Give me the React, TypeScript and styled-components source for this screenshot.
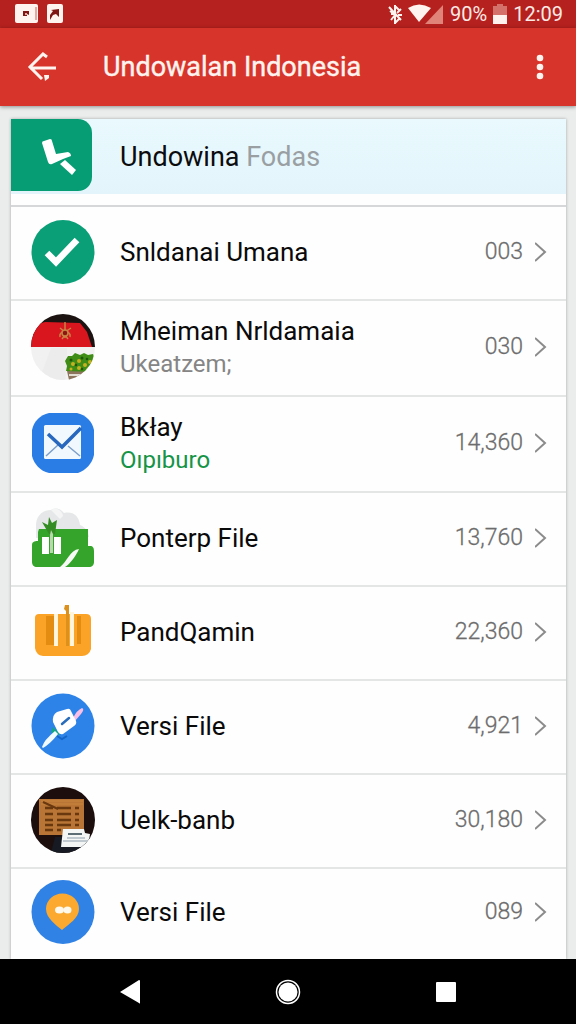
import React from "react";
import styled, { createGlobalStyle } from "styled-components";

const GlobalStyle = createGlobalStyle`
  * { box-sizing: border-box; }
  body {
    margin: 0;
    background: #ebecec;
    font-family: Roboto, "Liberation Sans", sans-serif;
  }
  button { border: 0; padding: 0; background: none; color: inherit; font: inherit; cursor: pointer; }
  svg { display: block; flex: none; }
`;

const Screen = styled.div`
  display: flex;
  flex-direction: column;
  min-height: 100vh;
`;

const StatusBar = styled.div`
  display: flex;
  align-items: center;
  justify-content: space-between;
  height: 28px;
  padding: 0 13px 0 15px;
  background: #b5211e;
  color: #fdeae6;
  font-size: 20px;
  line-height: 24px;
`;

const StatusGroup = styled.div<{ $gap: number }>`
  display: flex;
  align-items: center;
  gap: ${(p) => p.$gap}px;
`;

const AppBar = styled.header`
  display: flex;
  align-items: center;
  height: 78px;
  padding: 0 24px;
  background: #d7352b;
  color: #fff3ef;
  box-shadow: 0 1px 4px rgba(0, 0, 0, 0.4);
  z-index: 1;
`;

const Title = styled.h1`
  flex: 1;
  margin: 0 0 0 43px;
  font-size: 27px;
  line-height: 36px;
  font-weight: 400;
  -webkit-text-stroke: 0.4px currentColor;
`;

const IconButton = styled.button`
  display: grid;
  place-items: center;
  width: 36px;
  height: 48px;
  flex: none;
`;

const MenuButton = styled(IconButton)`
  width: 24px;
`;

const Card = styled.main`
  flex: 1;
  margin: 13px 10px 0 11px;
  background: #fefefe;
  box-shadow: 0 0 3px rgba(0, 0, 0, 0.3);
`;

const Banner = styled.a`
  display: flex;
  align-items: center;
  height: 75px;
  background: linear-gradient(#e9f9fe, #e3f5fb);
  color: #0b0c0d;
  font-size: 27px;
  line-height: 32px;
  text-decoration: none;
`;

const BannerIcon = styled.span`
  display: grid;
  place-items: center;
  align-self: flex-start;
  width: 81px;
  height: 72px;
  margin-right: 28px;
  border-radius: 0 14px 14px 0;
  background: #079d74;
`;

const Muted = styled.span`
  color: #999fa2;
`;

const List = styled.ul`
  margin: 11px 0 0;
  padding: 0;
  list-style: none;
  border-top: 2px solid #d6d7d8;
`;

const Row = styled.a<{ $tall: boolean }>`
  display: flex;
  align-items: center;
  min-height: ${(p) => (p.$tall ? 94 : 92)}px;
  padding: 10px 18px 13px 20px;
  color: #0a0a0a;
  text-decoration: none;
`;

const Item = styled.li`
  border-bottom: 2px solid #e4e5e5;
  &:last-child { border-bottom: 0; }
  &:last-child ${Row} { min-height: 88px; }
`;

const Labels = styled.span`
  display: flex;
  flex-direction: column;
  flex: 1;
  min-width: 0;
  margin-left: 25px;
`;

const Name = styled.span`
  font-size: 26px;
  line-height: 34px;
`;

const Detail = styled.span<{ $color: string }>`
  color: ${(p) => p.$color};
  font-size: 24px;
  line-height: 32px;
`;

const Count = styled.span`
  margin-right: 12px;
  color: #6c6c6c;
  font-size: 23px;
  font-weight: 300;
  line-height: 32px;
  -webkit-text-stroke: 0.3px currentColor;
`;

const NavBar = styled.nav`
  display: flex;
  align-items: center;
  justify-content: space-between;
  height: 65px;
  padding: 0 106px;
  background: #000;
  color: #fff;
  z-index: 1;
`;

const NavButton = styled.button`
  display: grid;
  place-items: center;
  width: 48px;
  height: 48px;
`;

const CheckIcon = () => (
  <svg width="64" height="66" viewBox="0 0 64 66" aria-hidden="true">
    <ellipse cx="32" cy="33" rx="31.5" ry="32" fill="#0b9f78" />
    <path d="M16 34 25 43 46 21" fill="none" stroke="#fff" strokeWidth="6.5" />
  </svg>
);

const FlagIcon = () => (
  <svg width="64" height="66" viewBox="0 0 64 66" aria-hidden="true">
    <defs>
      <clipPath id="flagClip"><ellipse cx="32" cy="33" rx="32" ry="33" /></clipPath>
    </defs>
    <g clipPath="url(#flagClip)">
      <path d="M0 0H64V66H0Z" fill="#f1f1f1" />
      <path d="M0 0H64V33H0Z" fill="#1b1312" />
      <path d="M0 33V12L14 8 49 9 56 18 61 33Z" fill="#d9151d" />
      <path d="M20 34H36V48L34 66H8Z" fill="#e9eaea" opacity=".6" />
      <g stroke="#c98445" strokeWidth="1.5" fill="none">
        <path d="M34 8V24M29 14 34 18 40 14M29 23Q28 18 34 18T39 23M31 25 34 21 37 25" />
        <circle cx="34" cy="19" r="3" fill="#8c1712" />
      </g>
      <path d="M36 57H64V66H38Z" fill="#8c755c" />
      <path d="M38 61H62" stroke="#e3ded3" strokeWidth="2" />
      <path d="M35 57 36 52 34 47 37 42 41 42 44 39 49 41 53 39 57 41 62 40 64 45V58Z" fill="#3f8d16" />
      <g fill="#c8b01f">
        <circle cx="42" cy="50" r="2" /><circle cx="48" cy="47" r="2" /><circle cx="54" cy="51" r="2" />
        <circle cx="59" cy="48" r="2" /><circle cx="48" cy="54" r="2" /><circle cx="40" cy="55" r="1.5" />
        <circle cx="57" cy="55" r="1.5" />
      </g>
      <g fill="#1e590b">
        <circle cx="40" cy="46" r="1.5" /><circle cx="51" cy="44" r="1.5" /><circle cx="45" cy="51" r="1.3" />
        <circle cx="56" cy="45" r="1.3" /><circle cx="51" cy="55" r="1.3" /><circle cx="61" cy="53" r="1.3" />
      </g>
    </g>
  </svg>
);

const MailIcon = () => (
  <svg width="64" height="66" viewBox="0 0 64 66" aria-hidden="true">
    <path d="M18 3H46C55 5 61 11 63 20V45C61 54 55 60 47 63H18C9 61 3 54 1 46V20C3 11 9 5 18 3Z" fill="#2b7de6" />
    <rect x="13" y="15" width="37" height="34" rx="1.5" fill="#f1f9fe" />
    <path d="M15 46 27 35M49 46 37 36" stroke="#7d9fc9" strokeWidth="1.5" />
    <path d="M17 24 31 37 50 18" fill="none" stroke="#2767bd" strokeWidth="3.5" />
  </svg>
);

const GreenFolderIcon = () => (
  <svg width="64" height="66" viewBox="0 0 64 66" aria-hidden="true">
    <path d="M5 33V19C6 9 13 5 20 5 25 2 30 4 33 8 42 6 48 11 49 20 54 22 57 26 58 32Z" fill="#e5e7e8" />
    <path d="M20 5C25 2 31 5 32 11L29 14Z" fill="#f5f5f6" />
    <path d="M8 24H57V41H59C62 41 63 43 63 46V57C63 60 61 62 58 62H6C3 62 1 60 1 57V40C1 37 3 36 7 36V27Z" fill="#35a42b" />
    <path d="M18 29 11 17 17 20 18 12 21 18 26 15 24 29Z" fill="#338d24" />
    <path d="M11 32H18V49H11ZM23 32H30V49H23Z" fill="#fff" />
    <path d="M19 48V30L20 25 22 29V48Z" fill="#b9d8ad" />
    <path d="M29 62C36 57 39 45 48 44 45 51 39 59 34 62Z" fill="#f7faf5" />
  </svg>
);

const OrangeBoxIcon = () => (
  <svg width="64" height="66" viewBox="0 0 64 66" aria-hidden="true">
    <path d="M8 15H55Q60 15 60 20V50Q58 57 51 57H12Q5 56 4 49V19Q4 15 8 15Z" fill="#faa326" />
    <path d="M15 17H23V46H15ZM46 17H50V45H46Z" fill="#e48b12" />
    <path d="M23 15H27V47H23Z" fill="#fff4dc" />
    <path d="M34 6H38V47H35V12L33 10Z" fill="#dc911f" />
    <path d="M39 13H43V47H39Z" fill="#fff4dc" />
  </svg>
);

const LinkIcon = () => (
  <svg width="64" height="66" viewBox="0 0 64 66" aria-hidden="true">
    <ellipse cx="32" cy="33" rx="31.5" ry="32.5" fill="#2d83e8" />
    <path d="M26 43 31 46 36 43" fill="none" stroke="#1465c8" strokeWidth="2" />
    <path d="M22 34 29 41 25 43 20 39Z" fill="#14a585" />
    <path d="M11 54Q13 47 24 38L27 41Q19 51 12 55Z" fill="#f1faff" />
    <path d="M42 25Q46 17 51 15 54 16 50 21L44 28Z" fill="#f9bfe6" />
    <path d="M26 19L36 16Q39 15 40 18L45 28Q46 31 43 33L32 41Q29 42 27 39L22 29Q21 22 26 19Z" fill="#fff" />
    <path d="M31 31 38 25" stroke="#286cbb" strokeWidth="2.5" strokeLinecap="round" />
  </svg>
);

const BoardIcon = () => (
  <svg width="64" height="66" viewBox="0 0 64 66" aria-hidden="true">
    <defs>
      <clipPath id="boardClip"><ellipse cx="32" cy="33" rx="32" ry="33" /></clipPath>
    </defs>
    <g clipPath="url(#boardClip)">
      <path d="M0 0H64V66H0Z" fill="#1b0e0d" />
      <path d="M20 66 24 50H62V66Z" fill="#171a23" />
      <path d="M8 12H53V48H8Z" fill="#b87535" />
      <path d="M10 14H52M10 17H52" stroke="#c7863f" strokeWidth="1" />
      <path d="M14 21H22M26 21H40M44 21H48M14 27H22M26 27H40M44 27H48M14 33H22M26 33H40M44 33H48M14 38H22M26 38H40M44 38H48M14 43H22M26 43H30" stroke="#69380f" strokeWidth="2.5" />
      <path d="M12 15 27 22" stroke="#69380f" strokeWidth="2" />
      <path d="M32 42H53L54 46 59 47 57 60H30Z" fill="#f4f6f6" />
      <path d="M37 47H51" stroke="#5c6d76" strokeWidth="2" />
      <path d="M32 54H57M36 51H54" stroke="#aebbc2" strokeWidth="1.5" />
    </g>
  </svg>
);

const PinIcon = () => (
  <svg width="64" height="66" viewBox="0 0 64 66" aria-hidden="true">
    <ellipse cx="32" cy="33" rx="31.5" ry="32" fill="#3182e5" />
    <path d="M31 51C25 46 15 39 15 30A16.500 15.500 0 0 1 48 30C48 39 38 45 31 51Z" fill="#fba92f" />
    <ellipse cx="28.500" cy="31" rx="4.500" ry="3.500" fill="#fff9ec" />
    <ellipse cx="36.500" cy="31" rx="4" ry="3.500" fill="#fff9ec" />
  </svg>
);

const Chevron = () => (
  <svg width="13" height="22" viewBox="0 0 13 22" fill="none" stroke="#8b8b8b" strokeWidth="2" aria-hidden="true">
    <path d="M0 2 10 11 0 20" />
  </svg>
);

type Entry = {
  icon: React.ReactElement;
  name: string;
  detail?: string;
  detailColor?: string;
  count: string;
};

const entries: Entry[] = [
  { icon: <CheckIcon />, name: "Snldanai Umana", count: "003" },
  { icon: <FlagIcon />, name: "Mheiman Nrldamaia", detail: "Ukeatzem;", detailColor: "#858585", count: "030" },
  { icon: <MailIcon />, name: "Bkłay", detail: "Oıpıburo", detailColor: "#159447", count: "14,360" },
  { icon: <GreenFolderIcon />, name: "Ponterp File", count: "13,760" },
  { icon: <OrangeBoxIcon />, name: "PandQamin", count: "22,360" },
  { icon: <LinkIcon />, name: "Versi File", count: "4,921" },
  { icon: <BoardIcon />, name: "Uelk-banb", count: "30,180" },
  { icon: <PinIcon />, name: "Versi File", count: "089" },
];

export default function App() {
  return (
    <Screen>
      <GlobalStyle />
      <StatusBar>
        <StatusGroup $gap={9}>
          <svg width="23" height="20" viewBox="0 0 23 20" aria-hidden="true">
            <rect width="23" height="19" rx="2" fill="#fff3ef" />
            <path d="M8 7H14V11L12 10V12H8Z" fill="#7e1615" />
            <path d="M10 9H12V11H10Z" fill="#e8a49c" />
            <path d="M21 3V16" stroke="#cf5d55" />
          </svg>
          <svg width="16" height="20" viewBox="0 0 16 20" aria-hidden="true">
            <rect width="16" height="19" rx="2" fill="#fff3ef" />
            <path d="M3 16V11L6 7 4 6 12 5V13L9 10 6 11Z" fill="#7e1615" />
          </svg>
        </StatusGroup>
        <StatusGroup $gap={6}>
          <svg width="14" height="22" viewBox="0 0 14 22" fill="none" stroke="#fff3ef" strokeWidth="2" aria-hidden="true">
            <path d="M7 2V21M7 3 11 7M1 4 13 17M2 8 9 13M3 11H7M3 17 7 12M9 10 13 6M10 12H14M7 20 11 16" />
          </svg>
          <svg width="36" height="22" viewBox="0 0 36 22" aria-hidden="true">
            <path d="M17 21H35V2Z" fill="#e08379" />
            <path d="M0 5Q11-2 23 5L11 19Z" fill="#fff3ef" />
          </svg>
          <span>90%</span>
          <svg width="14" height="20" viewBox="0 0 14 20" aria-hidden="true">
            <path d="M4 0H10V2H14V11H0V2H4Z" fill="#d3716a" />
            <path d="M0 11H14V20H0Z" fill="#fff3ef" />
          </svg>
          <span>12:09</span>
        </StatusGroup>
      </StatusBar>

      <AppBar>
        <IconButton type="button" aria-label="Kembali">
          <svg width="30" height="30" viewBox="0 0 30 30" fill="none" stroke="currentColor" strokeWidth="3" aria-hidden="true">
            <path d="M20 5 16 2 3 15 15 27M3 16H29" />
            <path d="M17 23H22V26L18 29Z" fill="currentColor" stroke="none" />
          </svg>
        </IconButton>
        <Title>Undowalan Indonesia</Title>
        <MenuButton type="button" aria-label="Menu">
          <svg width="8" height="26" viewBox="0 0 8 26" fill="currentColor" aria-hidden="true">
            <circle cx="4" cy="4" r="3.300" />
            <circle cx="4" cy="13" r="3.300" />
            <circle cx="4" cy="22" r="3.300" />
          </svg>
        </MenuButton>
      </AppBar>

      <Card>
        <Banner href="#">
          <BannerIcon>
            <svg width="81" height="72" viewBox="0 0 81 72" aria-hidden="true">
              <path d="M31 24Q31 22 33 22L39 20Q41 20 41 22L45 35 57 33Q60 34 60 37L52 40 41 45Q38 46 37 43Z" fill="#fff" />
              <path d="M49 45 54 41 65 51 61 56Z" fill="#fff" />
            </svg>
          </BannerIcon>
          <span>Undowina <Muted>Fodas</Muted></span>
        </Banner>
        <List>
          {entries.map((entry, i) => (
            <Item key={i}>
              <Row href="#" $tall={Boolean(entry.detail)}>
                {entry.icon}
                <Labels>
                  <Name>{entry.name}</Name>
                  {entry.detail && <Detail $color={entry.detailColor ?? "#858585"}>{entry.detail}</Detail>}
                </Labels>
                <Count>{entry.count}</Count>
                <Chevron />
              </Row>
            </Item>
          ))}
        </List>
      </Card>

      <NavBar>
        <NavButton type="button" aria-label="Kembali">
          <svg width="22" height="26" viewBox="0 0 22 26" aria-hidden="true">
            <path d="M20 1Q21 1 21 2V24Q21 25 20 24L1 13Z" fill="currentColor" />
          </svg>
        </NavButton>
        <NavButton type="button" aria-label="Beranda">
          <svg width="26" height="26" viewBox="0 0 26 26" aria-hidden="true">
            <circle cx="13" cy="13" r="11.500" fill="none" stroke="currentColor" strokeWidth="1.500" />
            <circle cx="13" cy="13" r="9.500" fill="currentColor" />
          </svg>
        </NavButton>
        <NavButton type="button" aria-label="Ikhtisar">
          <svg width="22" height="22" viewBox="0 0 22 22" aria-hidden="true">
            <rect x="1" y="1" width="20" height="20" rx="1" fill="currentColor" />
          </svg>
        </NavButton>
      </NavBar>
    </Screen>
  );
}
